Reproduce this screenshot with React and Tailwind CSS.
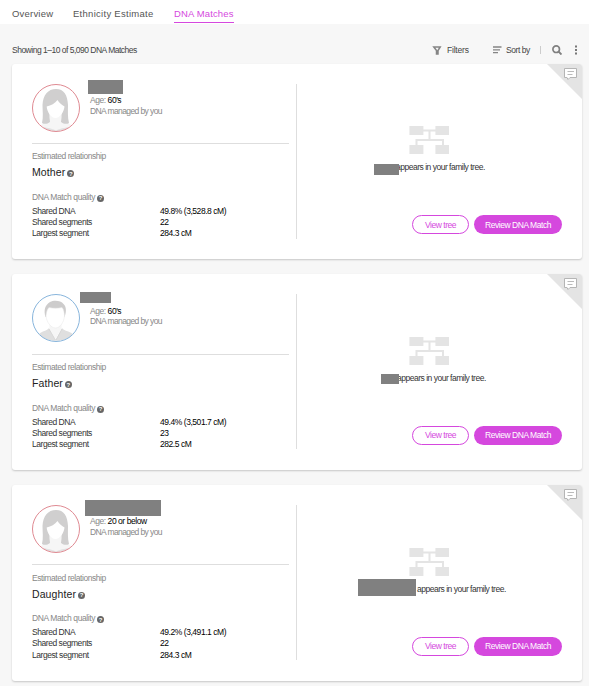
const tabs = [
  { label: 'Overview', className: 'w-[61px] tracking-[0.2px]' },
  { label: 'Ethnicity Estimate', className: 'w-[101px] tracking-[0.28px]' },
  { label: 'DNA Matches', className: 'w-[60px] tracking-[0.13px]', active: true }
]

const matches = [
  {
    relationship: 'Mother',
    gender: 'female',
    age: "60's",
    shared: '49.8% (3,528.8 cM)',
    segments: '22',
    largest: '284.3 cM',
    nameTag: 'left-[56px] top-[-4px] h-[14px] w-[35px]',
    treeRow: 'pl-[77px]',
    treeTag: 'h-[11px] w-[25px] -mr-[3px] mt-[2px]'
  },
  {
    relationship: 'Father',
    gender: 'male',
    age: "60's",
    shared: '49.4% (3,501.7 cM)',
    segments: '23',
    largest: '282.5 cM',
    nameTag: 'left-[48px] top-[-2.33px] h-[11px] w-[31px]',
    treeRow: 'pl-[84px]',
    treeTag: 'h-[10px] w-[18px] -mr-[2px] mt-[1px]'
  },
  {
    relationship: 'Daughter',
    gender: 'female',
    age: '20 or below',
    shared: '49.2% (3,491.1 cM)',
    segments: '22',
    largest: '284.3 cM',
    nameTag: 'left-[53px] top-[-5px] h-[16px] w-[76px]',
    treeRow: 'pl-[61px]',
    treeTag: 'h-[17px] w-[58px] mr-[1px] -mt-[5px]'
  }
]

function FemaleAvatar() {
  return (
    <svg viewBox="0 0 48 48" className="size-12 shrink-0">
      <circle cx="24" cy="24" r="23.5" fill="#fff" />
      <path d="M18 30H29V36C32 38 37 39 39 41C31 48.500 16 48.500 9 41C11 39 15 38 18 36Z" fill="#f6f6f6" />
      <path d="M11 43C19 44.500 21 45 24 46.500C27 45 29 44.500 37 43C30 48.500 18 48.500 11 43Z" fill="#e2e2e2" />
      <path d="M10 39C11.500 33 10.500 27 10.500 21C11 11 16 5 24 5C32 5 35.500 11 36 21C36 27 35.500 33 37 39C35 40.500 31.500 40 29 38C29.500 35 29.500 32 29.500 29H17.500C17.500 32 17.500 35 18 38C15.500 40 12 40.500 10 39Z" fill="#d0cfcf" />
      <path d="M18 30H29V37C26 38 21 38 18 37Z" fill="#f6f6f6" />
      <path d="M14.700 22.500C19 21.500 23 19.500 25.500 16C27 19 30 21 32.500 22.500C32 28 28 34 23.500 34C19 34 15 28 14.700 22.500Z" fill="#fff" />
      <circle cx="24" cy="24" r="23.5" fill="none" stroke="#df8a92" />
    </svg>
  )
}

function MaleAvatar() {
  return (
    <svg viewBox="0 0 48 48" className="size-12 shrink-0">
      <circle cx="24" cy="24" r="23.5" fill="#fff" />
      <path d="M7 40C10 37 15 37 17 34L23.500 46L30 34C32 37 37 37 41 40C34 49 14 49 7 40Z" fill="#dfdfdf" />
      <path d="M17.500 30H29.500V35L23.500 45L17.500 35Z" fill="#f6f6f6" />
      <path d="M17 35L23.500 46M30 35L24 46" stroke="#d2d2d2" strokeWidth="0.7" fill="none" />
      <path d="M13.500 23C11.500 16 13 11 18 8C22 6 29 6.500 31.500 10C35 13 34 19 32.500 23Z" fill="#cdcccc" />
      <path d="M14 22C14.500 18 15 15.500 17 13.500C21 14.500 26 14.500 30 13.500C32 15.500 32 18 32.500 22C32 28 28 34 23.500 34C19 34 14.500 28 14 22Z" fill="#fff" stroke="#e6e6e6" strokeWidth="0.5" />
      <circle cx="24" cy="24" r="23.5" fill="none" stroke="#88b5dc" />
    </svg>
  )
}

function HelpIcon() {
  return (
    <span className="flex size-[7px] items-center justify-center rounded-full bg-[#666] text-[6px] leading-none font-bold tracking-normal text-white">
      ?
    </span>
  )
}

function TreeIcon() {
  return (
    <svg width="40" height="28" viewBox="0 0 40 28" className="ml-[112px]">
      <g fill="#e4e4e4">
        <rect x="0.4" width="14" height="9" />
        <rect x="26.4" width="13.6" height="9" />
        <rect x="0.4" y="19" width="14" height="9" />
        <rect x="26.4" y="19" width="13.6" height="9" />
        <path d="M14 3.500H27V5.500H21.500V13H35V19H33V15H8.500V19H6.500V13H19.500V5.500H14Z" />
      </g>
    </svg>
  )
}

function CommentCorner() {
  return (
    <svg width="35" height="35" viewBox="0 0 35 35" className="absolute top-0 right-0 rounded-tr-[3px]">
      <path d="M0 0H35V35Z" fill="#e4e4e4" />
      <path d="M18 4.500H29.500V13.500H23L21 15.500L20 13.500H17.500V4.500Z" fill="#fff" stroke="#b5b5b5" strokeLinejoin="round" />
      <path d="M20.500 7.500H27M20.500 10.500H25.500" stroke="#bbb" fill="none" />
    </svg>
  )
}

function MatchCard({ match }) {
  return (
    <article className="relative flex h-[195.67px] w-[570px] rounded-[3px] bg-white px-5 pt-5 shadow-[0_1px_2px_rgba(0,0,0,0.2)]">
      <CommentCorner />
      <div className="w-[257px]">
        <div className="relative flex h-[60.2px] border-b border-[#dedede]">
          {match.gender === 'male' ? <MaleAvatar /> : <FemaleAvatar />}
          <div className="ml-[10px] pt-[11.5px] leading-[10.5px] text-[#888]">
            <p>Age: <span className="text-black">{match.age}</span></p>
            <p className="tracking-[-0.6px]">DNA managed by you</p>
          </div>
          <span className={`absolute bg-[#808080] ${match.nameTag}`} />
        </div>
        <p className="mt-[7.6px] leading-[11px] text-[#888]">Estimated relationship</p>
        <div className="mt-[3px] flex items-center gap-[2px] text-[10.5px] leading-[14px] tracking-[0.1px] text-[#222]">
          {match.relationship}
          <span className="pt-[3px]"><HelpIcon /></span>
        </div>
        <div className="mt-[12.5px] flex items-center gap-[2px] leading-[11px] tracking-[-0.4px] text-[#888]">
          DNA Match quality
          <span className="pt-[2px]"><HelpIcon /></span>
        </div>
        <dl className="mt-[3px] grid grid-cols-[128px_1fr] leading-[11.2px] text-[#333]">
          <dt>Shared DNA</dt>
          <dd className="text-black">{match.shared}</dd>
          <dt>Shared segments</dt>
          <dd className="text-black">{match.segments}</dd>
          <dt>Largest segment</dt>
          <dd className="text-black">{match.largest}</dd>
        </dl>
      </div>
      <div className="ml-[7px] h-[155px] w-[266px] border-l border-[#dedede] pt-[42.8px]">
        <TreeIcon />
        <div className={`mt-[8px] flex h-[11px] items-start leading-[11px] text-[#333] ${match.treeRow}`}>
          <span className={`relative z-10 shrink-0 bg-[#808080] ${match.treeTag}`} />
          <span className="tracking-[-0.49px] whitespace-nowrap">appears in your family tree.</span>
        </div>
        <div className="mt-[42px] flex justify-end gap-[5px]">
          <button className="h-[19px] w-[57px] rounded-full border border-[#d548de] leading-none text-[#d548de]">View tree</button>
          <button className="h-[19px] w-[88px] rounded-full bg-[#d548de] leading-none text-white">Review DNA Match</button>
        </div>
      </div>
    </article>
  )
}

export default function App() {
  return (
    <div className="h-[686px] w-[589px] overflow-hidden bg-[#f7f7f7] font-['Liberation_Sans',Arial,sans-serif] text-[8.5px] tracking-[-0.45px]">
      <nav className="flex h-6 bg-white pl-3 text-[9.5px] text-[#555]">
        {tabs.map((tab) => (
          <div
            key={tab.label}
            className={`h-[23px] pt-[8px] leading-[12px] whitespace-nowrap ${tab.className} ${tab.active ? 'border-b border-[#d548de] text-[#d548de]' : ''}`}
          >
            {tab.label}
          </div>
        ))}
      </nav>
      <div className="flex h-[39.67px] items-center pt-[13px] pl-3 text-[#444]">
        <p className="w-[420px] tracking-[-0.5px]">Showing 1–10 of 5,090 DNA Matches</p>
        <svg width="10" height="9" viewBox="0 0 10 9" className="mr-[5px]">
          <path d="M1.800 1H8.200L6 4.500V8H4.500V4.500Z" fill="none" stroke="#858585" strokeWidth="1.5" />
        </svg>
        <span className="w-[46px] tracking-[-0.2px]">Filters</span>
        <svg width="9" height="8" viewBox="0 0 9 8" className="mr-[4px]">
          <path d="M0 1H8.500M0 3.800H7M0 6.600H5" stroke="#858585" strokeWidth="1.3" />
        </svg>
        <span className="w-[34px]">Sort by</span>
        <span className="h-2 w-px bg-[#ccc]" />
        <svg width="10" height="10" viewBox="0 0 10 10" className="ml-[11px]">
          <circle cx="4.2" cy="4.2" r="3.3" fill="none" stroke="#808080" strokeWidth="1.7" />
          <path d="M6.500 6.500L9.500 9.500" stroke="#808080" strokeWidth="1.9" />
        </svg>
        <svg width="4" height="10" viewBox="0 0 4 10" className="ml-[12px]">
          <path d="M1 0.500H3V2.500H1ZM1 4H3V6H1ZM1 7.500H3V9.500H1Z" fill="#777" />
        </svg>
      </div>
      <main className="flex flex-col gap-[15px] pl-3">
        {matches.map((match) => (
          <MatchCard key={match.relationship} match={match} />
        ))}
      </main>
    </div>
  )
}
